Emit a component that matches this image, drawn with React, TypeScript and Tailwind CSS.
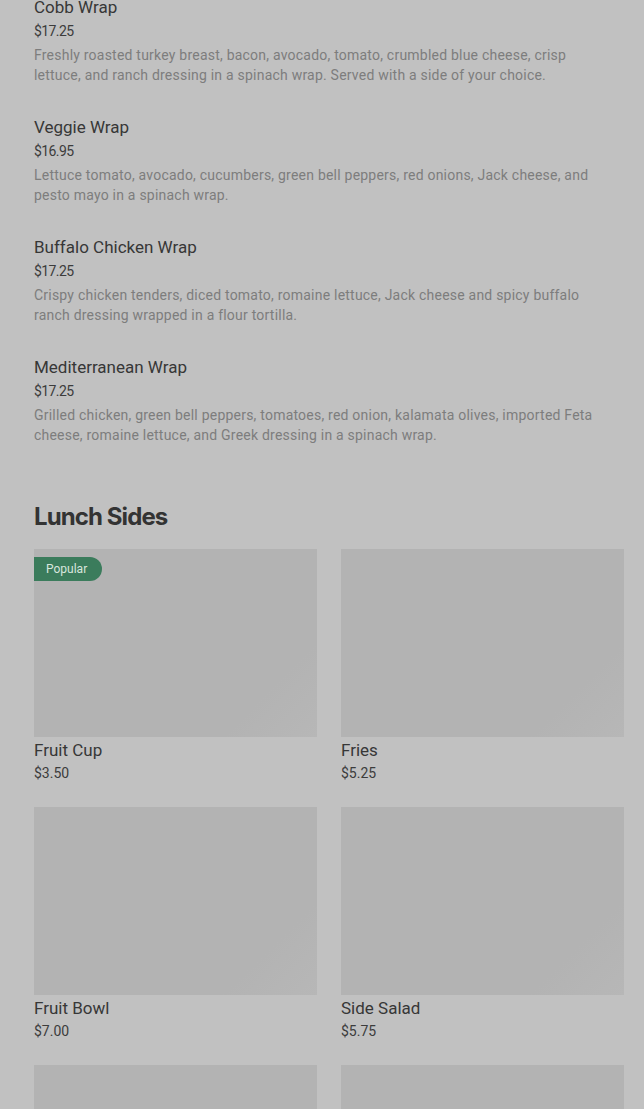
import React from "react";

const wraps = [
  {
    name: "Cobb Wrap",
    price: "$17.25",
    desc: "Freshly roasted turkey breast, bacon, avocado, tomato, crumbled blue cheese, crisp lettuce, and ranch dressing in a spinach wrap. Served with a side of your choice.",
  },
  {
    name: "Veggie Wrap",
    price: "$16.95",
    desc: "Lettuce tomato, avocado, cucumbers, green bell peppers, red onions, Jack cheese, and pesto mayo in a spinach wrap.",
  },
  {
    name: "Buffalo Chicken Wrap",
    price: "$17.25",
    desc: "Crispy chicken tenders, diced tomato, romaine lettuce, Jack cheese and spicy buffalo ranch dressing wrapped in a flour tortilla.",
  },
  {
    name: "Mediterranean Wrap",
    price: "$17.25",
    desc: "Grilled chicken, green bell peppers, tomatoes, red onion, kalamata olives, imported Feta cheese, romaine lettuce, and Greek dressing in a spinach wrap.",
  },
];

const sides = [
  { name: "Fruit Cup", price: "$3.50", popular: true },
  { name: "Fries", price: "$5.25" },
  { name: "Fruit Bowl", price: "$7.00" },
  { name: "Side Salad", price: "$5.75" },
  { name: "Chips", price: "$2.50" },
  { name: "Soup Cup", price: "$6.00" },
];

export default function App() {
  return (
    <div
      className="w-[644px] h-[1109px] overflow-hidden bg-[#c1c1c1] pl-[34px] pr-[20px]"
      style={{ fontFamily: "Roboto, 'Liberation Sans', sans-serif" }}
    >
      <div className="-mt-[5px] flex flex-col">
        {wraps.map((w) => (
          <div key={w.name} className="flex flex-col pb-[30px]">
            <div className="text-[17px] leading-[24px] text-[#373737]">{w.name}</div>
            <div className="mt-[2px] text-[14px] leading-[20px] tracking-[-0.6px] text-[#3c3c3c]">{w.price}</div>
            <div className="mt-[4px] w-[572px] text-[14px] leading-[20px] tracking-[0.22px] text-[#7d7d7d]">
              {w.desc}
            </div>
          </div>
        ))}
      </div>
      <h2
        className="mt-[26px] text-[24px] leading-[32px] font-bold text-[#333333] tracking-[-0.9px]"
        style={{ fontFamily: "Inter, 'Noto Sans', sans-serif" }}
      >
        Lunch Sides
      </h2>
      <div className="mt-[16px] grid grid-cols-2 gap-x-[24px] gap-y-[24px]">
        {sides.map((s) => (
          <div key={s.name} className="flex flex-col">
            <div className="relative h-[188px] bg-[linear-gradient(135deg,#b3b3b3_0%,#b3b3b3_80%,#b7b7b7_100%)]">
              {s.popular && (
                <div className="absolute left-0 top-[8px] h-[24px] w-[68px] rounded-r-full bg-[#3b7c5c] pl-[12px] text-[12px] leading-[24px] text-[#d8e6de]">
                  Popular
                </div>
              )}
            </div>
            <div className="mt-[1px] text-[17px] leading-[24px] text-[#373737]">{s.name}</div>
            <div className="mt-[1px] text-[14px] leading-[20px] text-[#3c3c3c]">{s.price}</div>
          </div>
        ))}
      </div>
    </div>
  );
}
